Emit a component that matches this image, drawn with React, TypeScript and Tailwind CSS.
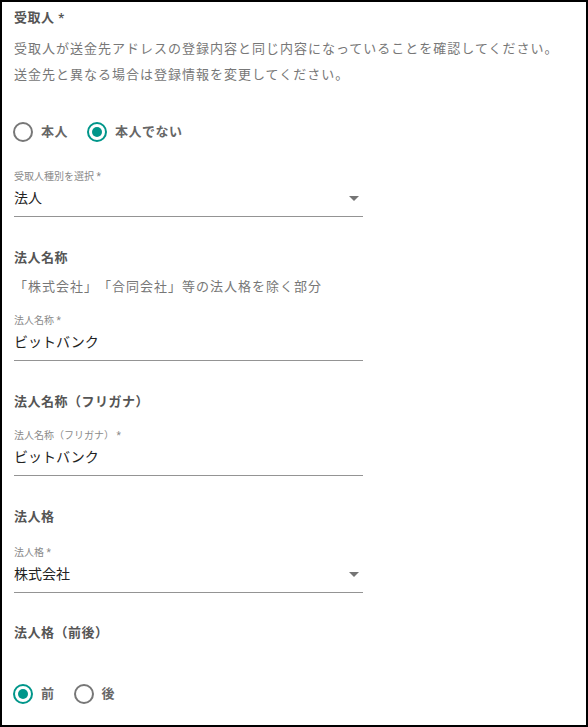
import { ReactNode } from 'react'

const font = "font-['Roboto','Noto_Sans_CJK_JP',sans-serif] [text-spacing-trim:space-all]"

const Heading = ({ children, className = '' }: { children: ReactNode; className?: string }) => (
  <p className={`text-[13px] font-bold leading-[20px] tracking-[0.5px] text-[#555] ${className}`}>
    {children}
  </p>
)

const Radio = ({ label, checked }: { label: string; checked?: boolean }) => (
  <label className="flex h-6 items-center gap-2">
    <span
      className={`-ml-px flex h-5 w-5 items-center justify-center rounded-full border-2 ${
        checked ? 'border-[#00968a]' : 'border-[#777]'
      }`}
    >
      {checked && <span className="h-2.5 w-2.5 rounded-full bg-[#00968a]" />}
    </span>
    <span className="text-[13px] font-bold tracking-[0.5px] text-[#666]">{label}</span>
  </label>
)

const Field = ({
  label,
  value,
  select,
  className = '',
}: {
  label: string
  value: string
  select?: boolean
  className?: string
}) => (
  <div className={`w-[349px] border-b border-[#949494] ${className}`}>
    <p className="text-[10px] leading-[12px] text-[#8a8a8a]">{label}</p>
    <div className="mt-[5px] flex items-center justify-between pb-[8px]">
      <span className="text-[14px] leading-[20px] text-[#222]">{value}</span>
      {select && (
        <svg width="10" height="5" viewBox="0 0 10 5" className="mr-1">
          <path d="M0 0h10L5 5z" fill="#757575" />
        </svg>
      )}
    </div>
  </div>
)

export default function App() {
  return (
    <div className={`h-[727px] w-[588px] border-2 border-black bg-white px-3 pt-[6px] ${font}`}>
      <Heading>受取人 *</Heading>
      <div className="mt-2 text-[13px] leading-[26px] tracking-[1px] text-[#777]">
        <p>受取人が送金先アドレスの登録内容と同じ内容になっていることを確認してください。</p>
        <p>送金先と異なる場合は登録情報を変更してください。</p>
      </div>

      <div className="mt-8 flex gap-5">
        <Radio label="本人" />
        <Radio label="本人でない" checked />
      </div>

      <Field className="mt-[27px]" label="受取人種別を選択 *" value="法人" select />

      <Heading className="mt-[31px]">法人名称</Heading>
      <p className="mt-[9px] text-[13px] leading-[20px] tracking-[1px] text-[#777]">
        「株式会社」「合同会社」等の法人格を除く部分
      </p>
      <Field className="mt-[18px]" label="法人名称 *" value="ビットバンク" />

      <Heading className="mt-[31px]">法人名称（フリガナ）</Heading>
      <Field className="mt-[18px]" label="法人名称（フリガナ） *" value="ビットバンク" />

      <Heading className="mt-[31px]">法人格</Heading>
      <Field className="mt-[20px]" label="法人格 *" value="株式会社" select />

      <Heading className="mt-[30px]">法人格（前後）</Heading>
      <div className="mt-[39px] flex gap-5">
        <Radio label="前" checked />
        <Radio label="後" />
      </div>
    </div>
  )
}
